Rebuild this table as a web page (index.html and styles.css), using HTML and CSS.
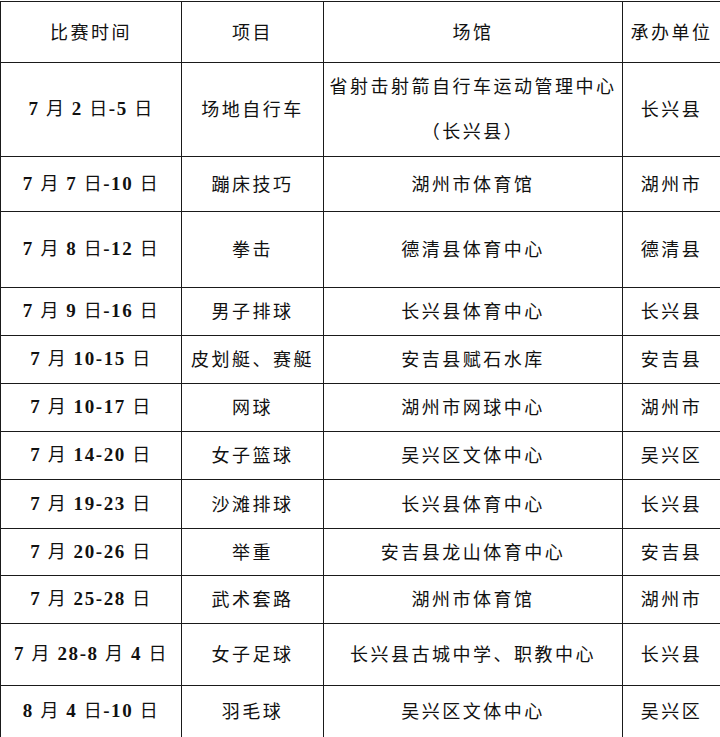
FILE: index.html
```html
<!DOCTYPE html>
<html lang="zh">
<head>
<meta charset="utf-8">
<title>赛程表</title>
<link rel="stylesheet" href="styles.css">
</head>
<body>
<table class="schedule">
  <colgroup>
    <col class="c-date">
    <col class="c-item">
    <col class="c-venue">
    <col class="c-host">
  </colgroup>
  <thead>
    <tr class="h61"><th>比赛时间</th><th>项目</th><th>场馆</th><th>承办单位</th></tr>
  </thead>
  <tbody>
    <tr class="h93"><td class="date"><span class="n">7</span> 月 <span class="n">2</span> 日<span class="n">-5</span> 日</td><td>场地自行车</td><td class="two">省射击射箭自行车运动管理中心<br>（长兴县）</td><td>长兴县</td></tr>
    <tr class="h55"><td class="date"><span class="n">7</span> 月 <span class="n">7</span> 日<span class="n">-10</span> 日</td><td>蹦床技巧</td><td>湖州市体育馆</td><td>湖州市</td></tr>
    <tr class="h76"><td class="date"><span class="n">7</span> 月 <span class="n">8</span> 日<span class="n">-12</span> 日</td><td>拳击</td><td>德清县体育中心</td><td>德清县</td></tr>
    <tr class="h48"><td class="date"><span class="n">7</span> 月 <span class="n">9</span> 日<span class="n">-16</span> 日</td><td>男子排球</td><td>长兴县体育中心</td><td>长兴县</td></tr>
    <tr class="h48"><td class="date"><span class="n">7</span> 月 <span class="n">10-15</span> 日</td><td>皮划艇、赛艇</td><td>安吉县赋石水库</td><td>安吉县</td></tr>
    <tr class="h48"><td class="date"><span class="n">7</span> 月 <span class="n">10-17</span> 日</td><td>网球</td><td>湖州市网球中心</td><td>湖州市</td></tr>
    <tr class="h48"><td class="date"><span class="n">7</span> 月 <span class="n">14-20</span> 日</td><td>女子篮球</td><td>吴兴区文体中心</td><td>吴兴区</td></tr>
    <tr class="h49"><td class="date"><span class="n">7</span> 月 <span class="n">19-23</span> 日</td><td>沙滩排球</td><td>长兴县体育中心</td><td>长兴县</td></tr>
    <tr class="h47"><td class="date"><span class="n">7</span> 月 <span class="n">20-26</span> 日</td><td>举重</td><td>安吉县龙山体育中心</td><td>安吉县</td></tr>
    <tr class="h48"><td class="date"><span class="n">7</span> 月 <span class="n">25-28</span> 日</td><td>武术套路</td><td>湖州市体育馆</td><td>湖州市</td></tr>
    <tr class="h62"><td class="date"><span class="n">7</span> 月 <span class="n">28-8</span> 月 <span class="n">4</span> 日</td><td>女子足球</td><td>长兴县古城中学、职教中心</td><td>长兴县</td></tr>
    <tr class="h52"><td class="date"><span class="n">8</span> 月 <span class="n">4</span> 日<span class="n">-10</span> 日</td><td>羽毛球</td><td>吴兴区文体中心</td><td>吴兴区</td></tr>
  </tbody>
</table>
</body>
</html>
```
FILE: styles.css
```css
html, body {
  margin: 0;
  padding: 0;
  background: #fff;
}
body {
  padding-top: 1px;
}
.schedule {
  width: 720px;
  table-layout: fixed;
  border-collapse: collapse;
  font-family: "Noto Sans CJK SC", "Liberation Serif", sans-serif;
  font-size: 18px;
  letter-spacing: 2.5px;
  color: #111;
}
.c-date { width: 181px; }
.c-item { width: 142px; }
.c-venue { width: 299px; }
.c-host { width: 98px; }
.schedule th,
.schedule td {
  border: 1px solid #1a1a1a;
  padding: 0 0 3px;
  text-align: center;
  vertical-align: middle;
  font-weight: normal;
  line-height: 22px;
  white-space: nowrap;
}
.schedule td.two {
  line-height: 45px;
}
.schedule td.date {
  letter-spacing: 1.4px;
  word-spacing: 1px;
}
.n {
  font-family: "Liberation Serif", serif;
  font-weight: bold;
  font-size: 19px;
  letter-spacing: 1.6px;
}
.h61 { height: 61px; }
.h93 { height: 93px; }
.h55 { height: 55px; }
.h76 { height: 76px; }
.h48 { height: 48px; }
.h49 { height: 49px; }
.h47 { height: 47px; }
.h62 { height: 62px; }
.h52 { height: 52px; }
```
